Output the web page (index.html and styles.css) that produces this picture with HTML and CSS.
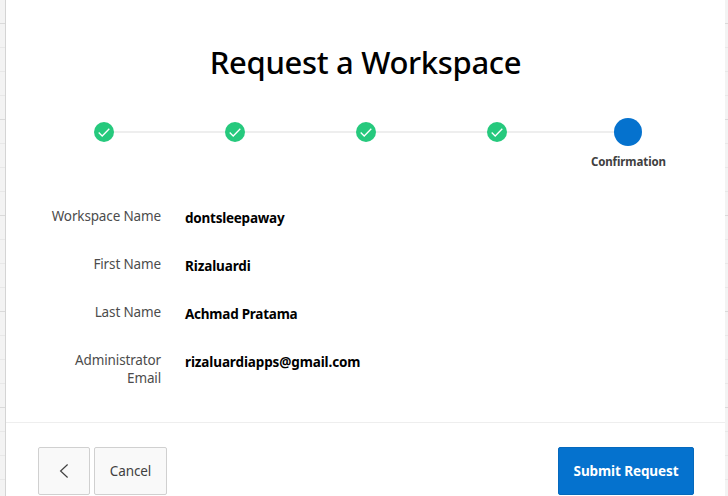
FILE: index.html
```html
<!DOCTYPE html>
<html lang="en">
<head>
<meta charset="utf-8">
<title>Request a Workspace</title>
<link rel="stylesheet" href="styles.css">
</head>
<body>
<main class="wizard">
  <h1 class="title">Request a Workspace</h1>
  <ol class="steps">
    <li class="step"><span class="marker"><svg viewBox="0 0 20 20"><path d="M4.7 10.5 8.2 14 15.3 6.7"/></svg></span></li>
    <li class="step"><span class="marker"><svg viewBox="0 0 20 20"><path d="M4.7 10.5 8.2 14 15.3 6.7"/></svg></span></li>
    <li class="step"><span class="marker"><svg viewBox="0 0 20 20"><path d="M4.7 10.5 8.2 14 15.3 6.7"/></svg></span></li>
    <li class="step"><span class="marker"><svg viewBox="0 0 20 20"><path d="M4.7 10.5 8.2 14 15.3 6.7"/></svg></span></li>
    <li class="step current"><span class="marker"></span><span class="step-label">Confirmation</span></li>
  </ol>
  <dl class="details">
    <div class="row"><dt>Workspace Name</dt><dd class="tight">dontsleepaway</dd></div>
    <div class="row"><dt>First Name</dt><dd>Rizaluardi</dd></div>
    <div class="row"><dt>Last Name</dt><dd class="tight">Achmad Pratama</dd></div>
    <div class="row"><dt>Administrator<br>Email</dt><dd>rizaluardiapps@gmail.com</dd></div>
  </dl>
  <footer class="actions">
    <button class="button back" aria-label="Back"><svg viewBox="0 0 16 16"><path d="M11.6 1.5 4.6 8l7 6.5"/></svg></button>
    <button class="button cancel">Cancel</button>
    <button class="button submit">Submit Request</button>
  </footer>
</main>
</body>
</html>
```
FILE: styles.css
```css
* { box-sizing: border-box; }

body {
  margin: 0;
  height: 496px;
  overflow: hidden;
  padding: 0 3px 0 5px;
  font-family: "Noto Sans", "Open Sans", sans-serif;
  color: #404040;
  background-color: #f3f3f3;
  background-image:
    linear-gradient(to bottom, #dadada 1px, transparent 1px),
    linear-gradient(to bottom, #e8e8e8 1px, transparent 1px);
  background-size: 100% 96px, 100% 24px;
  background-position: 0 23px;
}

.wizard {
  height: 496px;
  display: flex;
  flex-direction: column;
  background: #fff;
  border-left: 1px solid #d4d4d4;
}

.title {
  margin: 0;
  padding-top: 38px;
  height: 118px;
  font-size: 31px;
  line-height: 48px;
  font-weight: 500;
  letter-spacing: -0.32px;
  color: #000;
  text-align: center;
  white-space: nowrap;
}

.steps {
  display: flex;
  list-style: none;
  margin: 0;
  padding: 0 31px 0 32px;
  height: 88px;
}

.step {
  flex: 1;
  display: flex;
  flex-direction: column;
  align-items: center;
  position: relative;
}

.step + .step::before {
  content: "";
  position: absolute;
  top: 13px;
  right: 50%;
  width: 100%;
  height: 2px;
  background: #eee;
}

.marker {
  position: relative;
  z-index: 1;
  width: 20px;
  height: 20px;
  margin-top: 4px;
  border-radius: 50%;
  background: #26c97d;
}

.marker svg { display: block; }

.marker path {
  fill: none;
  stroke: #fff;
  stroke-width: 1.3;
}

.current .marker {
  width: 28px;
  height: 28px;
  margin-top: 0;
  background: #0572ce;
}

.step-label {
  margin-top: 7px;
  font-size: 11.5px;
  line-height: 18px;
  font-weight: 700;
  letter-spacing: -0.1px;
}

.details {
  margin: 0;
  padding-left: 32px;
  height: 216px;
}

.row {
  display: flex;
  height: 48px;
}

.row dt {
  width: 123px;
  padding-top: 1px;
  font-size: 13.5px;
  line-height: 18px;
  letter-spacing: -0.14px;
  color: #4c4c4c;
  text-align: right;
}

.row dd {
  margin: 0 0 0 24px;
  padding-top: 2px;
  font-size: 13.5px;
  line-height: 20px;
  font-weight: 700;
  letter-spacing: -0.12px;
  color: #000;
  white-space: nowrap;
}

.row .tight { letter-spacing: -0.24px; }

.actions {
  display: flex;
  gap: 4px;
  border-top: 1px solid #eee;
  padding: 24px 31px 0 32px;
}

.button {
  display: flex;
  align-items: center;
  justify-content: center;
  height: 48px;
  padding: 0;
  border: 1px solid #d0d0d0;
  border-radius: 2px;
  background: #f9f9f9;
  color: #404040;
  font: 13.5px/20px "Noto Sans", "Open Sans", sans-serif;
  letter-spacing: -0.1px;
  white-space: nowrap;
}

.back { width: 52px; }

.back svg {
  width: 16px;
  height: 16px;
  fill: none;
  stroke: #404040;
  stroke-width: 1.2;
}

.cancel { width: 73px; }

.submit {
  width: 136px;
  margin-left: auto;
  border-color: #0569bd;
  background: #0572ce;
  color: #fff;
  font-weight: 700;
}
```
